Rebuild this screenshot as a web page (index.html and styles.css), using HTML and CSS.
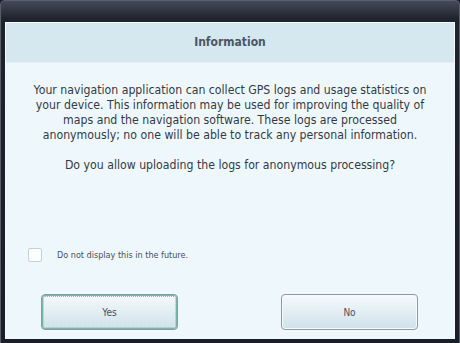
FILE: index.html
```html
<!DOCTYPE html>
<html lang="en">
<head>
    <meta charset="UTF-8">
    <title>Information</title>
    <link rel="stylesheet" href="styles.css">
</head>
<body>
    <div class="frame">
        <div class="panel">
            <div class="panel-head">Information</div>
            <div class="panel-body">
                <p class="message">Your navigation application can collect GPS logs and usage statistics on your device. This information may be used for improving the quality of maps and the navigation software. These logs are processed anonymously; no one will be able to track any personal information.</p>
                <p class="question">Do you allow uploading the logs for anonymous processing?</p>

                <label class="check-row">
                    <span class="check-box"></span>
                    <span class="check-label">Do not display this in the future.</span>
                </label>

                <div class="actions">
                    <button class="btn btn-focus">Yes</button>
                    <button class="btn">No</button>
                </div>
            </div>
        </div>
    </div>
</body>
</html>
```

FILE: styles.css
```css
html, body {
    margin: 0;
    padding: 0;
    background: #1a1d26;
}

body {
    font-family: 'DejaVu Sans Condensed', 'DejaVu Sans', sans-serif;
    color: #343a44;
}

.frame {
    width: 460px;
    height: 343px;
    box-sizing: border-box;
    padding: 21px 4px 4px 4px;
    border-radius: 5px 5px 0 0;
    background: linear-gradient(to bottom, #454a5a 0px, #1f232e 18px, #1b1e28 100%);
    border: 1px solid #5a5f6c;
    border-bottom: none;
}

.panel {
    height: 317px;
    box-sizing: border-box;
    border: 1px solid #f4fbfe;
    background: #eef8fc;
    display: flex;
    flex-direction: column;
}

.panel-head {
    height: 39px;
    line-height: 39px;
    text-align: center;
    background: #d5e8ef;
    border-bottom: 1px solid #e4f1f6;
    font-weight: bold;
    font-size: 12px;
    color: #4b5666;
}

.panel-body {
    flex: 1;
    display: flex;
    flex-direction: column;
    padding: 0 22px;
}

.message {
    margin: 20px 0 0;
    text-align: center;
    font-size: 12.2px;
    line-height: 15px;
}

.question {
    margin: 15px 0 0;
    text-align: center;
    font-size: 12.2px;
    line-height: 15px;
}

.check-row {
    display: flex;
    align-items: center;
    gap: 15px;
    margin: 75px 0 0 0;
}

.check-box {
    width: 12px;
    height: 12px;
    border: 1px solid #c8cfd4;
    border-radius: 2px;
    background: #fbfdfe;
}

.check-label {
    font-size: 9px;
    color: #4a4f5a;
}

.actions {
    display: flex;
    justify-content: space-between;
    margin: 32px 14px 0 13px;
}

.btn {
    width: 137px;
    height: 36px;
    border: 1px solid #8d99a2;
    border-radius: 4px;
    background: linear-gradient(to bottom, #f4f9fb 0%, #e2eef3 50%, #cfe1ea 100%);
    box-shadow: inset 0 0 0 1px #f5fafc;
    font-family: inherit;
    font-size: 10px;
    color: #4a4f60;
    padding: 0;
}

.btn-focus {
    box-shadow: inset 0 0 0 1px #79b6a8;
    outline: 1px dotted #8ac4b6;
    outline-offset: -3px;
}
```
